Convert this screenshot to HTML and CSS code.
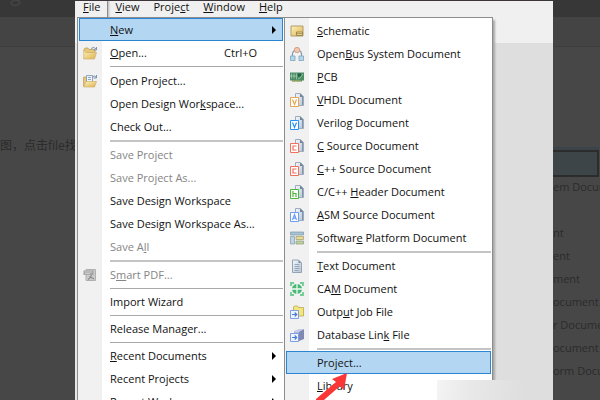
FILE: index.html
```
<!DOCTYPE html>
<html lang="zh-CN">
<head>
  <meta charset="UTF-8">
  <meta name="viewport" content="width=device-width, initial-scale=1">
  <title>File - New - Project</title>
  <link rel="stylesheet" href="styles.css">
</head>
<body>
  <svg class="defs" aria-hidden="true">
    <defs>
      <linearGradient id="gold" x1="0" y1="0" x2="1" y2="1">
        <stop offset="0" stop-color="#fff3c0"/>
        <stop offset="1" stop-color="#dcb24c"/>
      </linearGradient>
      <linearGradient id="paper" x1="0" y1="0" x2="1" y2="1">
        <stop offset="0" stop-color="#f4f8fc"/>
        <stop offset="1" stop-color="#b4c4d4"/>
      </linearGradient>
      <symbol id="page" viewBox="0 0 14 14">
        <path d="M5.500.5h5l3 3v9h-8z" fill="url(#paper)" stroke="#9cacbe"/>
        <path d="M10 .5v3.500h3.500z" fill="#6f8298"/>
        <path d="M12.500 4v8" stroke="#8294aa"/>
      </symbol>
    </defs>
  </svg>

  <aside class="backdrop left">
    <div class="band"><span class="big">g</span></div>
    <div class="band light"></div>
    <p class="caption">图，点击file找到</p>
  </aside>

  <main class="window">
    <nav class="menubar">
      <button class="open"><u>F</u>ile</button>
      <button><u>V</u>iew</button>
      <button>Proje<u>c</u>t</button>
      <button><u>W</u>indow</button>
      <button><u>H</u>elp</button>
    </nav>
    <div class="toolbar"></div>
    <div class="workspace"></div>

    <div class="menu file-menu" role="menu">
      <button class="item selected"><span><u>N</u>ew</span><i class="more"></i></button>
      <button class="item">
        <svg class="icon" viewBox="0 0 14 14"><path d="M1 3.500l1-1.500h3l1 1.500h6V7H1z" fill="#e8c878" stroke="#b89850" stroke-width=".7"/><path d="M.6 13L1 4l2 2.500h10.500L11.500 13z" fill="url(#gold)" stroke="#cdb070" stroke-width=".7"/><path d="M8 2.500Q11 0 13 3M13.500 1v3h-3" fill="none" stroke="#7e93ae"/></svg>
        <span><u>O</u>pen...</span><kbd>Ctrl+O</kbd>
      </button>
      <hr>
      <button class="item">
        <svg class="icon" viewBox="0 0 14 14"><path d="M.6 3h3v9h-3z" fill="#e8c878" stroke="#b89850" stroke-width=".7"/><path d="M3.500 1.500h6v8h-6z" fill="#edf4fb" stroke="#7e93ae" stroke-width=".8"/><path d="M5 3.500h3M5 5.500h3" stroke="#7e93ae" stroke-width=".8"/><path d="M.6 13L3 7.500h10.500L11.500 13z" fill="url(#gold)" stroke="#cdb070" stroke-width=".7"/><path d="M9.500 3Q11 1 13 3M13.500 1v3h-3" fill="none" stroke="#7e93ae"/></svg>
        <span>Open Project...</span>
      </button>
      <button class="item"><span>Open Design Wor<u>k</u>space...</span></button>
      <button class="item"><span>Check Out...</span></button>
      <hr class="thick">
      <button class="item" disabled><span>Save Project</span></button>
      <button class="item" disabled><span>Save Project As...</span></button>
      <button class="item"><span>Save Design Workspace</span></button>
      <button class="item"><span>Save Design Workspace As...</span></button>
      <button class="item" disabled><span>Save A<u>l</u>l</span></button>
      <hr class="thick">
      <button class="item" disabled>
        <svg class="icon" viewBox="0 0 14 14"><path d="M3 1.500h9.500v11H3z" fill="#cacaca" stroke="#b0b0b0"/><path d="M.5 2.500h10v4.500H.5z" fill="#a4a4a4"/><path d="M2 4h7M2 5.700h5" stroke="#dcdcdc" stroke-width=".8"/><path d="M5 11.500Q8 10 8.500 7M6.500 8.500l4.500 2.500" fill="none" stroke="#8c8c8c" stroke-width="1.200"/></svg>
        <span>S<u>m</u>art PDF...</span>
      </button>
      <hr class="tight">
      <button class="item"><span>Import Wizard</span></button>
      <hr class="tight">
      <button class="item"><span>Release Manager...</span></button>
      <hr class="tight">
      <button class="item"><span><u>R</u>ecent Documents</span><i class="more"></i></button>
      <button class="item"><span>Recent Projects</span><i class="more"></i></button>
      <button class="item"><span>Recent Workspaces</span><i class="more"></i></button>
    </div>

    <div class="menu new-menu" role="menu">
      <button class="item">
        <svg class="icon" viewBox="0 0 14 14"><path d="M1 2h12v10H1z" fill="url(#gold)" stroke="#b09c68"/><path d="M6.500 8h6v3.500h-6z" fill="#f3dc98" stroke="#927a40" stroke-width=".8"/><path d="M6.500 9.700h6" stroke="#927a40" stroke-width=".8"/></svg>
        <span><u>S</u>chematic</span>
      </button>
      <button class="item">
        <svg class="icon" viewBox="0 0 14 14"><path d="M4.500 3.500Q2 5 2.500 9M9.500 3.500Q12 5 11.500 9" fill="none" stroke="#8798a8" stroke-width="1.200"/><circle cx="7" cy="3" r="2.700" fill="#f4c4ac" stroke="#c49884" stroke-width=".8"/><path d="M.5 9h4.500v4.500H.5zM9 9h4.500v4.500H9z" fill="#b4d8ea" stroke="#7ca4be" stroke-width=".8"/></svg>
        <span>Open<u>B</u>us System Document</span>
      </button>
      <button class="item">
        <svg class="icon" viewBox="0 0 14 14"><path d="M0 2.500h14v8h-2v1H2v-1H0z" fill="#4c8c68"/><path d="M1.500 3.500v5M4 3.500v5M6.500 3.500v6M0 6h7" stroke="#b0d0b8" stroke-width=".7"/><path d="M8 3.500h3v3H8z" fill="#285c48"/><path d="M8 9l2-1 3-4" fill="none" stroke="#8cc87c"/><path d="M2 11h9" stroke="#c0b468"/></svg>
        <span><u>P</u>CB</span>
      </button>
      <button class="item">
        <svg class="icon orange" viewBox="0 0 14 14"><use href="#page"/><path class="tag" d="M.5 4.500h8v9h-8z"/><path class="mark" d="M2.500 6.500l2 5 2-5"/></svg>
        <span><u>V</u>HDL Document</span>
      </button>
      <button class="item">
        <svg class="icon blue" viewBox="0 0 14 14"><use href="#page"/><path class="tag" d="M.5 4.500h8v9h-8z"/><path class="mark" d="M2.500 6.500l2 5 2-5"/></svg>
        <span>Verilo<u>g</u> Document</span>
      </button>
      <button class="item">
        <svg class="icon red" viewBox="0 0 14 14"><use href="#page"/><path class="tag" d="M.5 4.500h8v9h-8z"/><path class="mark" d="M6.500 7h-3.500v4h3.500"/></svg>
        <span><u>C</u> Source Document</span>
      </button>
      <button class="item">
        <svg class="icon red" viewBox="0 0 14 14"><use href="#page"/><path class="tag" d="M.5 4.500h8v9h-8z"/><path class="mark" d="M6.500 7h-3.500v4h3.500"/></svg>
        <span><u>C</u>++ Source Document</span>
      </button>
      <button class="item">
        <svg class="icon green" viewBox="0 0 14 14"><use href="#page"/><path class="tag" d="M.5 4.500h8v9h-8z"/><path class="mark" d="M3 6v6M3 8.500h3v3.500"/></svg>
        <span>C/C++ <u>H</u>eader Document</span>
      </button>
      <button class="item">
        <svg class="icon azure" viewBox="0 0 14 14"><use href="#page"/><path class="tag" d="M.5 4.500h8v9h-8z"/><path class="mark" d="M2.500 12l2-5.500 2 5.500M3 10.200h3"/></svg>
        <span><u>A</u>SM Source Document</span>
      </button>
      <button class="item">
        <svg class="icon" viewBox="0 0 14 14"><path d="M.5 1h13v3H.5z" fill="#a8c4d4" stroke="#7c98a8" stroke-width=".7"/><path d="M.5 5.500h4v7.500h-4z" fill="#bcd4e4" stroke="#8098a8" stroke-width=".7"/><path d="M6 5.500h7.500v3H6z" fill="#e4dc94" stroke="#a09c68" stroke-width=".7"/><path d="M6 10h7.500v3H6z" fill="#c0d0a0" stroke="#8c9c78" stroke-width=".7"/></svg>
        <span>Softwar<u>e</u> Platform Document</span>
      </button>
      <hr class="thick">
      <button class="item">
        <svg class="icon" viewBox="0 0 14 14"><path d="M2.500 1h6l3 3v9.500h-9z" fill="url(#paper)" stroke="#94a4b6"/><path d="M8.500 1v3h3z" fill="#7e90a4"/><path d="M4.500 5.500h5M4.500 7.500h5M4.500 9.500h5M4.500 11.500h4" stroke="#8698ac" stroke-width=".8"/></svg>
        <span><u>T</u>ext Document</span>
      </button>
      <button class="item">
        <svg class="icon" viewBox="0 0 14 14"><path d="M1 4V1h3M10 1h3v3M13 10v3h-3M4 13H1v-3" fill="none" stroke="#70cc94" stroke-width="1.800"/><circle cx="7" cy="7" r="5" fill="#48b878"/><path d="M7 1v12M1 7h12" stroke="#eefaf0" stroke-width="1.300"/></svg>
        <span>CA<u>M</u> Document</span>
      </button>
      <button class="item">
        <svg class="icon" viewBox="0 0 14 14"><path d="M3.500 11V2l1-1h3l1 1.500h5V11z" fill="#f4e67c" stroke="#b8a850" stroke-width=".8"/><path d="M.5 5.500h8v8h-8z" fill="#edf4ff" stroke="#7ca0e0"/><path d="M2 9.500h4.500M4.700 7.500l2 2-2 2" fill="none" stroke="#4c7cd0" stroke-width="1.200"/></svg>
        <span>Outp<u>u</u>t Job File</span>
      </button>
      <button class="item">
        <svg class="icon" viewBox="0 0 14 14"><path d="M4 3l5 1v8l-5-1z" fill="#b0b8dc"/><path d="M9 3l5-2v10l-5 2z" fill="#8088b4"/><path d="M4 3l5-2h5L9 4z" fill="#c4cce8"/><path d="M.5 5.500h8v8h-8z" fill="#edf4ff" stroke="#7ca0e0"/><path d="M2 9.500h4.500M4.700 7.500l2 2-2 2" fill="none" stroke="#4c7cd0" stroke-width="1.200"/></svg>
        <span>Database Lin<u>k</u> File</span>
      </button>
      <hr class="thick">
      <button class="item selected"><span>Pro<u>j</u>ect...</span></button>
      <button class="item"><span><u>L</u>ibrary</span></button>
    </div>

    <div class="fade"></div>
    <svg class="pointer" viewBox="0 0 32 28" aria-hidden="true">
      <path d="M31 1L16 7l4 3L0 27v1h8L24 14l4 4z" fill="#fb3636"/>
    </svg>
  </main>

  <aside class="backdrop right">
    <div class="band"></div>
    <div class="band light"></div>
    <div class="ghost">
      <div class="ghost-bar"></div>
      <p>em Document</p>
      <p></p>
      <p>nt</p>
      <p>ent</p>
      <p>ment</p>
      <p>ocument</p>
      <p>r Document</p>
      <p>ocument</p>
      <p>orm Document</p>
    </div>
  </aside>
</body>
</html>
```
FILE: styles.css
```
* {
  box-sizing: border-box;
}
body {
  display: flex;
  height: 100vh;
  margin: 0;
  overflow: hidden;
  background: #474747;
  font-family: "Open Sans", "Noto Sans CJK SC", sans-serif;
  font-size: 11px;
  color: #111111;
}
button {
  border: none;
  background: none;
  font: inherit;
  color: inherit;
}
u {
  text-underline-offset: 1px;
}
.defs {
  position: absolute;
  width: 0;
  height: 0;
}

/* dimmed page */
.backdrop {
  flex: none;
  overflow: hidden;
  white-space: nowrap;
  color: #2b2b2b;
}
.left {
  width: 75px;
}
.right {
  width: 47px;
}
.band {
  height: 17px;
  background: #373737;
  overflow: hidden;
}
.band.light {
  height: 30px;
  background: #444444;
  border-bottom: 1px solid #3e3e3e;
}
.big {
  display: block;
  margin-top: -6px;
  padding-left: 10px;
  font-size: 20px;
  line-height: 0;
  color: #444444;
}
.caption {
  margin: 90px 0 0;
  font-size: 12px;
  line-height: 18px;
}
.ghost {
  margin-top: 103px;
}
.ghost-bar {
  height: 27px;
  margin-right: 1px;
  border: 2px solid #2c2c2c;
  border-left: none;
  background: #3e4549;
  box-shadow: 0 -3px #3c444b;
}
.ghost p {
  height: 23px;
  margin: 0;
  line-height: 20px;
}

/* application window */
.window {
  position: relative;
  display: flex;
  flex-direction: column;
  flex: 1;
  overflow: hidden;
  border-top: 1px solid #3b3438;
  background: #dedede;
}
.menubar {
  display: flex;
  height: 17px;
  padding-left: 1px;
  background: #f0f0f0;
}
.menubar button {
  display: flex;
  height: 17px;
  padding: 0 7px;
  line-height: 12px;
}
.menubar .open {
  border-right: 1px solid #8c8c8c;
  box-shadow: 1px 0 2px #b4b4b4;
}
.toolbar {
  height: 25px;
  background: #f0f0f0;
}
.workspace {
  flex: 1;
  border-left: 3px solid #e6e6e6;
}

.menu {
  position: absolute;
  top: 16px;
  bottom: -2px;
  border: 1px solid #8c8c8c;
  background: linear-gradient(to right, #f1f1f1 24px, #ffffff 24px);
}
.file-menu {
  left: 2px;
  width: 208px;
  padding: 0 1px;
}
.new-menu {
  left: 209px;
  width: 209px;
  padding: 1px 1px 0;
  box-shadow: 2px 3px 2px #a8a8a8;
}
.item {
  display: flex;
  align-items: center;
  width: 100%;
  height: 23px;
  padding: 0 16px 0 31px;
  text-align: left;
  white-space: nowrap;
}
.item:disabled {
  color: #858585;
}
.item span {
  flex: 1;
}
.item kbd {
  padding-right: 10px;
  font: inherit;
}
.selected {
  border: 1px solid #2b85d0;
  padding: 0 15px 0 30px;
  background: #b3d6f2;
}
.icon {
  width: 14px;
  height: 14px;
  margin: 0 13px 0 -27px;
}
.more {
  border: 4px solid transparent;
  border-left-color: #000000;
  border-right: none;
  margin-right: -9px;
}
hr {
  height: 5px;
  margin: 0 0 0 31px;
  border: solid #ffffff;
  border-width: 2px 0;
  background: #a8a8a8;
}
hr.thick {
  border-bottom-width: 1px;
  background: #c4c4c4;
}
hr.tight {
  height: 4px;
  border-bottom-width: 1px;
}

/* file type badges */
.tag {
  fill: #ffffff;
  stroke: currentColor;
}
.mark {
  fill: none;
  stroke: currentColor;
  stroke-width: 1.2;
}
.orange {
  color: #eba54f;
}
.blue {
  color: #2492f5;
}
.red {
  color: #f2705c;
}
.green {
  color: #4cb83c;
}
.azure {
  color: #6c9cf4;
}

.fade {
  position: absolute;
  right: 0;
  bottom: 0;
  width: 116px;
  height: 20px;
  background: linear-gradient(100deg, #f4f4f4, #e8e8e8 30%, #dedede 75%);
}
.pointer {
  position: absolute;
  left: 241px;
  bottom: 0;
  width: 32px;
  height: 28px;
}
```
